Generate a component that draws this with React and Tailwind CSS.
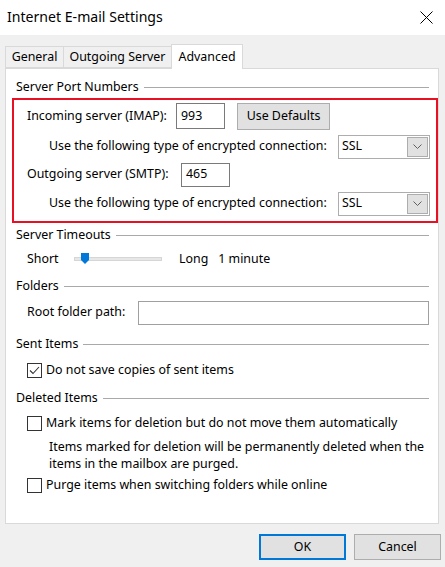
import { useState } from "react";

const FONT = { fontFamily: '"Segoe UI", "Noto Sans", sans-serif' };

function GroupHeader({ title, className = "" }) {
  return (
    <div className={`flex items-center h-[18px] pl-[10px] pr-[9px] ${className}`}>
      <span className="whitespace-nowrap">{title}</span>
      <div className="flex-1 h-px bg-[#a9a9a9] ml-[5px]" />
    </div>
  );
}

function TextBox({ value = "", className = "" }) {
  return (
    <div className={`h-[23px] border border-[#7a7a7a] bg-white flex items-center px-[4px] ${className}`}>
      {value}
    </div>
  );
}

function Combo({ value }) {
  return (
    <div className="w-[92px] h-[24px] border border-[#adadad] bg-white flex items-center pl-[3px] pr-px">
      <span className="flex-1">{value}</span>
      <div className="w-[21px] h-[20px] bg-[#e1e1e1] border border-[#adadad] flex items-center justify-center">
        <svg width="9" height="5" viewBox="0 0 9 5">
          <path d="M0.5 0.5 L4.5 4.5 L8.5 0.5" fill="none" stroke="#606060" strokeWidth="1" />
        </svg>
      </div>
    </div>
  );
}

function CheckBox({ checked, label, className = "" }) {
  return (
    <div className={`flex items-center h-[18px] pl-[21px] ${className}`}>
      <div className="w-[15px] h-[15px] border border-[#333333] bg-white flex items-center justify-center shrink-0">
        {checked && (
          <svg width="11" height="9" viewBox="0 0 11 9">
            <path d="M1 4.5 L4 7.5 L10 1" fill="none" stroke="#333333" strokeWidth="1.1" />
          </svg>
        )}
      </div>
      <span className="ml-[4px] whitespace-nowrap">{label}</span>
    </div>
  );
}

export default function App() {
  const [tab] = useState("advanced");

  const tabs = [
    { id: "general", label: "General", w: "w-[58px]" },
    { id: "outgoing", label: "Outgoing Server", w: "w-[108px]" },
    { id: "advanced", label: "Advanced", w: "w-[72px]" },
  ];

  return (
    <div className="w-[445px] h-[567px] bg-[#f0f0f0] text-[12.4px] text-black overflow-hidden" style={FONT}>
      {/* Title bar */}
      <div className="h-[35px] bg-white flex items-center pl-[7px] pr-[12px]">
        <span className="flex-1 text-[14.1px] leading-none">Internet E-mail Settings</span>
        <svg width="13" height="13" viewBox="0 0 13 13">
          <path d="M0.5 0.5 L12.5 12.5 M12.5 0.5 L0.5 12.5" stroke="#000" strokeWidth="1" />
        </svg>
      </div>

      {/* Tabs */}
      <div className="flex items-end h-[24px] mt-[9px] pl-[5px]">
        {tabs.map((t) =>
          t.id === tab ? (
            <div
              key={t.id}
              className={`${t.w} h-[25px] -mb-px relative z-10 bg-white border border-b-0 border-[#d9d9d9] flex items-start justify-center pt-[3px]`}
            >
              {t.label}
            </div>
          ) : (
            <div
              key={t.id}
              className={`${t.w} h-[22px] bg-[#f0f0f0] border border-[#d9d9d9] border-r-0 flex items-center justify-center whitespace-nowrap`}
            >
              {t.label}
            </div>
          )
        )}
      </div>

      {/* Panel */}
      <div className="ml-[5px] w-[434px] h-[456px] bg-white border border-[#d9d9d9] flex flex-col">
        <GroupHeader title="Server Port Numbers" className="mt-[9px]" />

        <div className="ml-[6px] mt-[2px] border-2 border-[#e81123] pt-[3px] pb-[6px]">
          <div className="flex items-center h-[26px] pl-[13px]">
            <span className="w-[149px] whitespace-nowrap">Incoming server (IMAP):</span>
            <TextBox value="993" className="w-[49px] h-[26px]" />
            <div className="ml-[12px] w-[93px] h-[27px] bg-[#e1e1e1] border border-[#adadad] flex items-center justify-center">
              Use Defaults
            </div>
          </div>
          <div className="flex items-center h-[23px] mt-[6px] pl-[35px]">
            <span className="flex-1 whitespace-nowrap">Use the following type of encrypted connection:</span>
            <div className="mr-[6px]">
              <Combo value="SSL" />
            </div>
          </div>
          <div className="flex items-center h-[23px] mt-[5px] pl-[13px]">
            <span className="w-[154px] whitespace-nowrap">Outgoing server (SMTP):</span>
            <TextBox value="465" className="w-[49px] h-[24px]" />
          </div>
          <div className="flex items-center h-[23px] mt-[6px] pl-[35px]">
            <span className="flex-1 whitespace-nowrap">Use the following type of encrypted connection:</span>
            <div className="mr-[6px]">
              <Combo value="SSL" />
            </div>
          </div>
        </div>

        <GroupHeader title="Server Timeouts" className="mt-[3px]" />
        <div className="flex items-center h-[18px] mt-[6px] pl-[21px]">
          <span className="w-[47px]">Short</span>
          <div className="relative w-[88px] h-[10px] flex items-center">
            <div className="w-full h-[4px] bg-[#e7e7e7] border border-[#d6d6d6]" />
            <svg className="absolute left-[7px] top-[-1px]" width="8" height="11" viewBox="0 0 8 11">
              <path d="M0 0 H8 V7 L4 11 L0 7 Z" fill="#0078d7" />
            </svg>
          </div>
          <span className="ml-[17px]">Long</span>
          <span className="ml-[10px]">1 minute</span>
        </div>

        <GroupHeader title="Folders" className="mt-[9px]" />
        <div className="flex items-center h-[23px] mt-[6px] pl-[21px] pr-[9px]">
          <span className="w-[111px] whitespace-nowrap">Root folder path:</span>
          <TextBox className="flex-1 border-[#a0a0a0] h-[24px]" />
        </div>

        <GroupHeader title="Sent Items" className="mt-[11px]" />
        <CheckBox checked label="Do not save copies of sent items" className="mt-[8px]" />

        <GroupHeader title="Deleted Items" className="mt-[10px]" />
        <CheckBox label="Mark items for deletion but do not move them automatically" className="mt-[7px]" />
        <p className="mt-[6px] pl-[43px] pr-[4px] leading-[17px]">
          Items marked for deletion will be permanently deleted when the items in the mailbox are purged.
        </p>
        <CheckBox label="Purge items when switching folders while online" className="mt-[4px]" />
      </div>

      {/* Buttons */}
      <div className="flex justify-end gap-[8px] mt-[10px] pr-[4px]">
        <div className="w-[87px] h-[26px] bg-[#e1e1e1] border-2 border-[#0078d7] flex items-center justify-center">
          OK
        </div>
        <div className="w-[87px] h-[26px] bg-[#e1e1e1] border border-[#adadad] flex items-center justify-center">
          Cancel
        </div>
      </div>
    </div>
  );
}
